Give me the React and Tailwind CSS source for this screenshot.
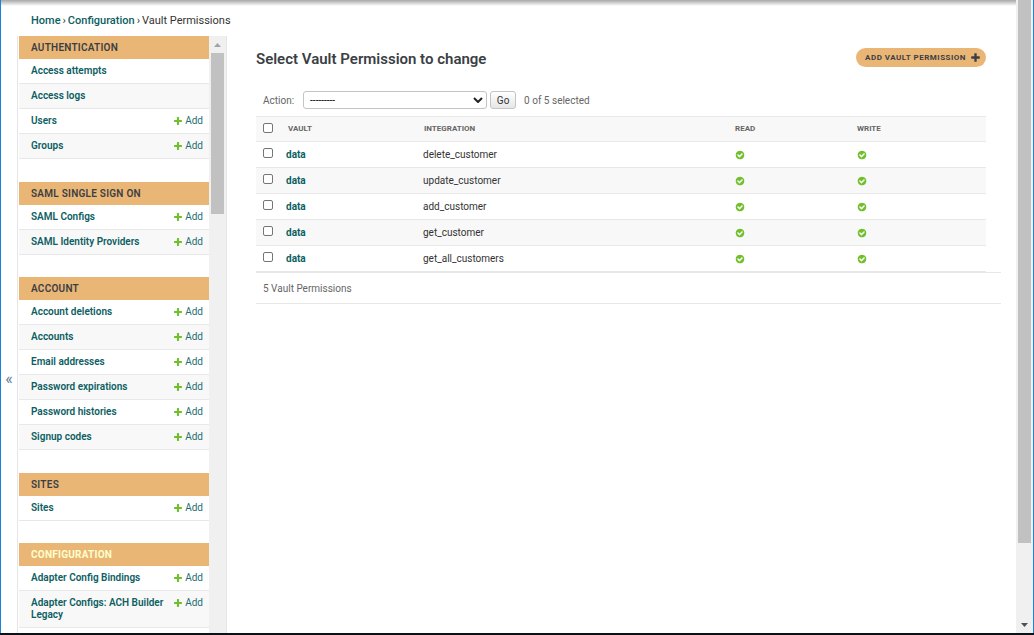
const GROUPS = [
  {
    title: "Authentication",
    items: [
      { name: "Access attempts", add: false },
      { name: "Access logs", add: false },
      { name: "Users", add: true },
      { name: "Groups", add: true },
    ],
  },
  {
    title: "SAML Single Sign On",
    items: [
      { name: "SAML Configs", add: true },
      { name: "SAML Identity Providers", add: true },
    ],
  },
  {
    title: "Account",
    items: [
      { name: "Account deletions", add: true },
      { name: "Accounts", add: true },
      { name: "Email addresses", add: true },
      { name: "Password expirations", add: true },
      { name: "Password histories", add: true },
      { name: "Signup codes", add: true },
    ],
  },
  { title: "Sites", items: [{ name: "Sites", add: true }] },
  {
    title: "Configuration",
    current: true,
    items: [
      { name: "Adapter Config Bindings", add: true },
      { name: "Adapter Configs: ACH Builder Legacy", add: true },
    ],
  },
];

const ROWS = [
  "delete_customer",
  "update_customer",
  "add_customer",
  "get_customer",
  "get_all_customers",
];

function PlusIcon({ className }) {
  return (
    <svg viewBox="0 0 1792 1792" className={className} fill="currentColor" aria-hidden="true">
      <path d="M1600 796v192q0 40-28 68t-68 28h-416v416q0 40-28 68t-68 28h-192q-40 0-68-28t-28-68v-416h-416q-40 0-68-28t-28-68v-192q0-40 28-68t68-28h416v-416q0-40 28-68t68-28h192q40 0 68 28t28 68v416h416q40 0 68 28t28 68z" />
    </svg>
  );
}

function YesIcon() {
  return (
    <svg viewBox="0 0 1792 1792" className="size-2.5 text-[#70bf2b]" fill="currentColor" role="img" aria-label="True">
      <path d="M1412 734q0-28-18-46l-91-90q-19-19-45-19t-45 19l-408 407-226-226q-19-19-45-19t-45 19l-91 90q-18 18-18 46 0 27 18 45l362 362q19 19 45 19 27 0 46-19l543-543q18-18 18-45zm252 162q0 209-103 385.5t-279.5 279.5-385.5 103-385.5-103-279.5-279.5-103-385.5 103-385.5 279.5-279.5 385.5-103 385.5 103 279.5 279.5 103 385.5z" />
    </svg>
  );
}

function Check({ label }) {
  return (
    <input
      type="checkbox"
      aria-label={label}
      className="block size-2.5 appearance-none rounded-[2px] border border-[#767676] bg-white checked:bg-[#0075ff]"
    />
  );
}

function NavGroup({ group }) {
  return (
    <section className="mb-[23px] even:mb-[22px]">
      <h2
        className={
          group.current
            ? "flex h-[23px] items-center bg-[#eab676] px-3 text-[10px] font-bold tracking-wide text-[#ffffcc] uppercase"
            : "flex h-[23px] items-center bg-[#eab676] px-3 text-[10px] font-semibold tracking-wide text-[#3b3f45] uppercase"
        }
      >
        <a href="#app">{group.title}</a>
      </h2>
      <ul>
        {group.items.map((item) => (
          <li
            key={item.name}
            className="flex items-start justify-between border-b border-[#e8e8e8] py-1.5 pr-1.5 pl-3 text-[10px] leading-3 even:bg-[#f8f8f8]"
          >
            <a href="#model" className="w-[136px] font-semibold text-[#0c5e62]">
              {item.name}
            </a>
            {item.add && (
              <a href="#add" className="flex items-center gap-0.5 text-[#1f6f70]">
                <PlusIcon className="size-2.5 text-[#70bf2b]" />
                Add
              </a>
            )}
          </li>
        ))}
      </ul>
    </section>
  );
}

function Sidebar() {
  return (
    <nav aria-label="Sidebar" className="flex w-[210px] shrink-0 border-x border-[#e6e6e6]">
      <div className="min-w-0 flex-1 overflow-hidden pl-px">
        {GROUPS.map((group) => (
          <NavGroup key={group.title} group={group} />
        ))}
      </div>
      <div className="flex w-[17px] shrink-0 flex-col bg-[#f0f0f0]">
        <div className="flex h-[17px] items-center pl-[5px]">
          <svg viewBox="0 0 7 4" className="h-1 w-[7px]" fill="#a3a3a3" aria-hidden="true">
            <path d="M0 4L3.5 0L7 4z" />
          </svg>
        </div>
        <div className="mr-0.5 ml-0.5 h-[161px] bg-[#c1c1c1]" />
      </div>
    </nav>
  );
}

function ChangeList() {
  const th = "p-0 text-left text-[8px] font-bold text-[#666]";
  return (
    <main className="min-w-0 flex-1 pr-[15px] pl-[29px]">
      <div className="mr-[15px] flex h-[43px] items-center justify-between">
        <h1 className="pt-0.5 text-[15px] leading-5 font-semibold text-[#3b3f45]">
          Select Vault Permission to change
        </h1>
        <a
          href="#add"
          className="flex h-[19px] items-center gap-1 rounded-full bg-[#eab676] pr-[5px] pl-[9px] text-[8px] font-bold tracking-[0.5px] text-[#3b3f45] uppercase"
        >
          Add Vault Permission
          <PlusIcon className="size-[11px]" />
        </a>
      </div>
      <form className="mt-3 flex h-[18px] items-center pl-[7px] text-[10px] text-[#666]">
        <label htmlFor="action">Action:</label>
        <div className="relative ml-[9px]">
          <select
            id="action"
            className="block h-[18px] w-[184px] appearance-none rounded-[3px] border border-[#c4c4c4] bg-white px-1.5 text-[10px] text-black"
          >
            <option>---------</option>
          </select>
          <svg
            viewBox="0 0 10 6"
            className="pointer-events-none absolute top-1.5 right-1 h-1.5 w-2.5"
            fill="none"
            stroke="#222"
            strokeWidth="2"
            aria-hidden="true"
          >
            <path d="M1 1l4 4l4-4" />
          </svg>
        </div>
        <button
          type="button"
          className="ml-[3px] h-[18px] w-[26px] rounded-[3px] border border-[#c4c4c4] bg-linear-to-b from-white to-[#e6e6e6] text-[#333]"
        >
          Go
        </button>
        <span className="ml-2">0 of 5 selected</span>
      </form>
      <div className="mt-[7px] pr-[15px]">
        <table className="w-full table-fixed border-collapse text-[10px] text-[#333]">
          <colgroup>
            <col className="w-[30px]" />
            <col className="w-[137px]" />
            <col />
            <col className="w-[122px]" />
            <col className="w-[129px]" />
          </colgroup>
          <thead>
            <tr className="h-[25px] border-y border-[#e8e8e8] bg-[#f8f8f8]">
              <th className="p-0 pb-0.5 pl-[7px]">
                <Check label="Select all" />
              </th>
              <th className={`${th} pl-0.5`}>VAULT</th>
              <th className={`${th} pl-px`}>INTEGRATION</th>
              <th className={th}>READ</th>
              <th className={th}>WRITE</th>
            </tr>
          </thead>
          <tbody>
            {ROWS.map((name) => (
              <tr key={name} className="h-[26px] border-b border-[#e8e8e8] even:bg-[#f8f8f8]">
                <td className="p-0 pb-1 pl-[7px]">
                  <Check label={`Select ${name}`} />
                </td>
                <th scope="row" className="p-0 pb-px text-left font-bold text-[#0c5e62]">
                  <a href="#row">data</a>
                </th>
                <td className="p-0 pb-px">{name}</td>
                <td className="p-0">
                  <YesIcon />
                </td>
                <td className="p-0">
                  <YesIcon />
                </td>
              </tr>
            ))}
          </tbody>
        </table>
      </div>
      <p className="flex h-8 items-center border-y border-[#e8e8e8] pl-[7px] text-[10px] text-[#666]">
        5 Vault Permissions
      </p>
    </main>
  );
}

export default function App() {
  return (
    <div className="flex h-screen flex-col overflow-hidden border-b-2 border-[#0b1116] bg-white font-['Roboto',sans-serif]">
      <div className="flex min-h-0 flex-1 border-l border-[#1883d7]">
        <div className="flex min-w-0 flex-1 flex-col">
          <div className="h-1.5 shrink-0 bg-linear-to-b from-[#a8a8a8] to-white" />
          <nav aria-label="Breadcrumbs" className="flex h-[30px] shrink-0 items-center gap-0.5 pl-[30px] text-[11px] text-[#333]">
            <a href="#home" className="font-medium text-[#0c5e62]">Home</a>
            <span>›</span>
            <a href="#configuration" className="font-medium text-[#0c5e62]">Configuration</a>
            <span>›</span>
            <span>Vault Permissions</span>
          </nav>
          <div className="flex min-h-0 flex-1">
            <button
              type="button"
              aria-label="Toggle navigation"
              className="flex w-4 shrink-0 items-center justify-center pt-[88px] text-[16px] text-[#5d7890]"
            >
              «
            </button>
            <Sidebar />
            <ChangeList />
          </div>
        </div>
        <div className="flex w-[18px] shrink-0 flex-col justify-between border-r border-[#1883d7] bg-[#f0f0f0]">
          <div className="mr-0.5 ml-0.5 h-[543px] bg-[#c1c1c1]" />
          <div className="flex h-4 items-center pl-[5px]">
            <svg viewBox="0 0 7 4" className="h-1 w-[7px]" fill="#505050" aria-hidden="true">
              <path d="M0 0L3.5 4L7 0z" />
            </svg>
          </div>
        </div>
      </div>
    </div>
  );
}
